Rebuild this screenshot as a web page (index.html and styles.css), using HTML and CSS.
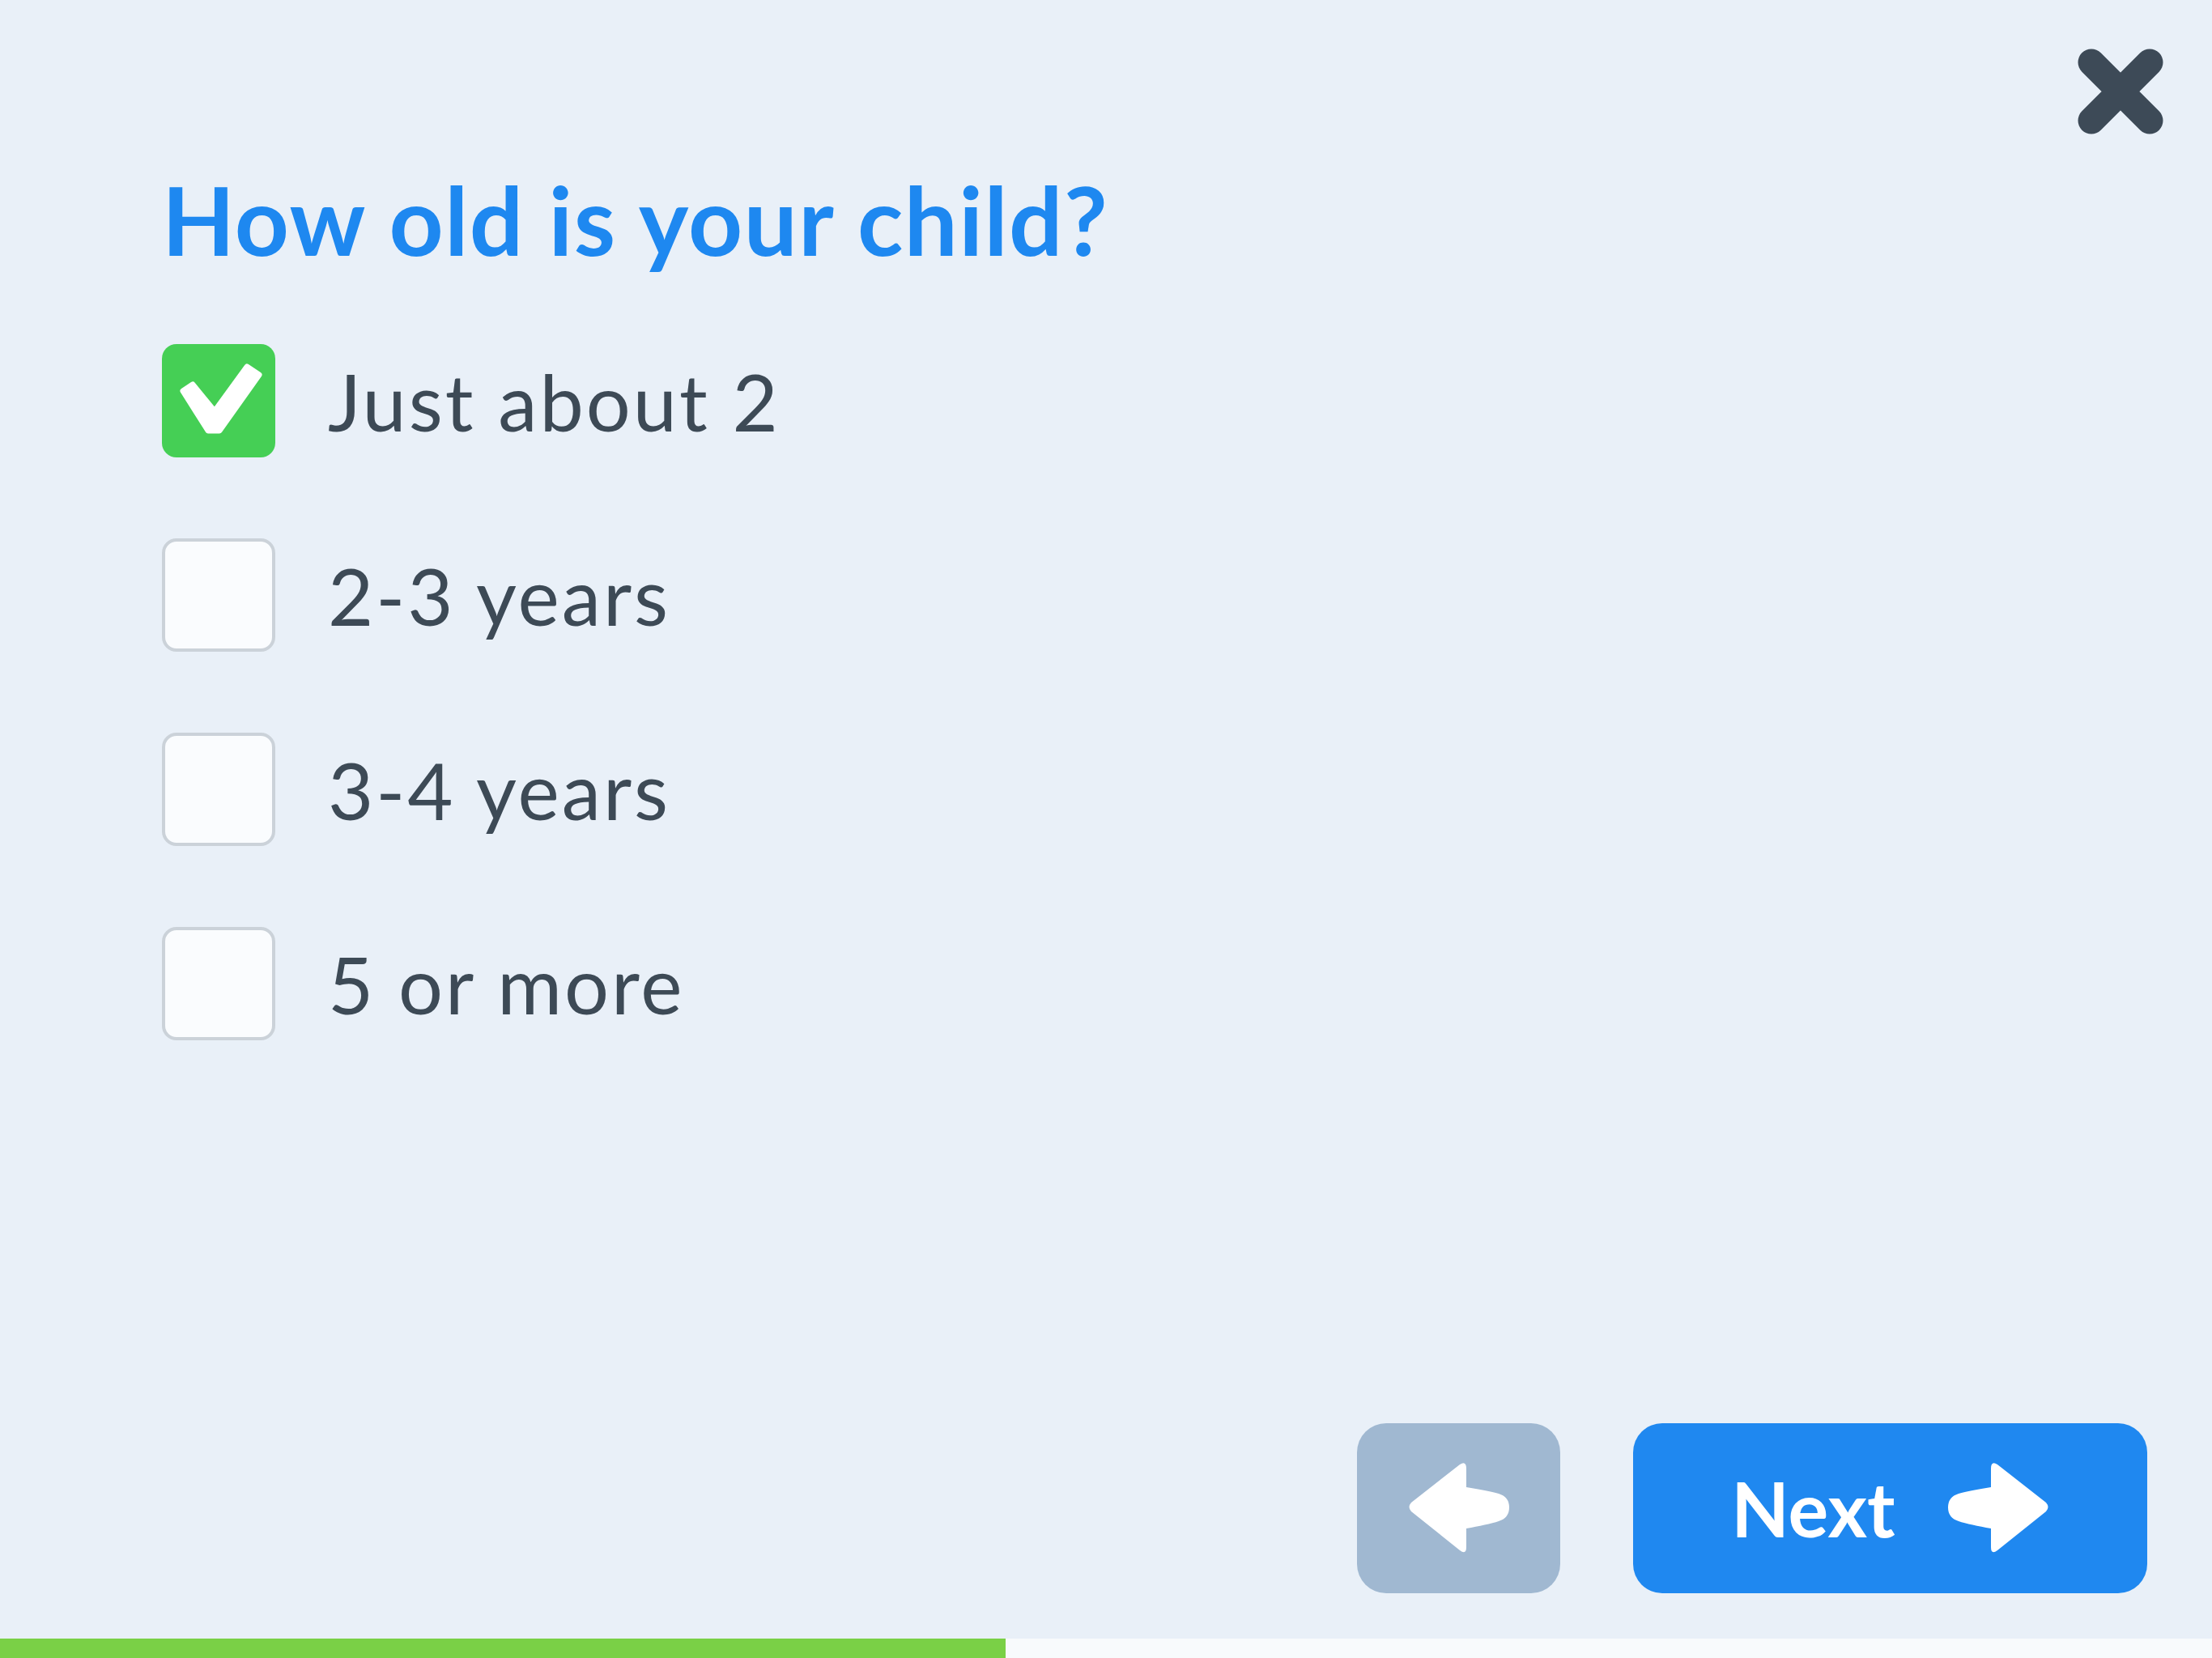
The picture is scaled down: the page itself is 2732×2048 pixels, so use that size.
FILE: index.html
```html
<!DOCTYPE html>
<html lang="en">
<head>
<meta charset="utf-8">
<title>How old is your child?</title>
<link rel="stylesheet" href="styles.css">
</head>
<body>
<div class="page">
  <header class="topbar">
    <button class="close" aria-label="Close">
      <svg width="106" height="106" viewBox="0 0 106 106"><path d="M17 17 L89 89 M89 17 L17 89" stroke="#3d4a57" stroke-width="33" stroke-linecap="round" fill="none"/></svg>
    </button>
  </header>
  <main class="content">
    <h1 class="question">How old is your child?</h1>
    <ul class="options">
      <li class="option">
        <span class="box checked">
          <svg width="140" height="140" viewBox="0 0 140 140"><polygon points="26,58 38,50 65,83 105,28 120,38 71,107 57,107" fill="#fff" stroke="#fff" stroke-width="7" stroke-linejoin="round"/></svg>
        </span>
        <span class="label">Just about 2</span>
      </li>
      <li class="option">
        <span class="box"></span>
        <span class="label">2-3 years</span>
      </li>
      <li class="option">
        <span class="box"></span>
        <span class="label">3-4 years</span>
      </li>
      <li class="option">
        <span class="box"></span>
        <span class="label">5 or more</span>
      </li>
    </ul>
  </main>
  <footer class="actions">
    <button class="btn back" aria-label="Back">
      <svg class="arrow flip" width="126" height="118" viewBox="7 9 126 118"><path d="M61 19 Q61 9 69 14 L129 61 Q134 66.5 129 72 L69 120 Q61 126 61 116 L61 93 C45 90 30 87 21 84 Q8 80 8 67 Q8 54 21 50 C30 47 45 45 61 42 Z" fill="#fff"/></svg>
    </button>
    <button class="btn next">
      <span class="btn-text">Next</span>
      <svg class="arrow" width="126" height="118" viewBox="7 9 126 118"><path d="M61 19 Q61 9 69 14 L129 61 Q134 66.5 129 72 L69 120 Q61 126 61 116 L61 93 C45 90 30 87 21 84 Q8 80 8 67 Q8 54 21 50 C30 47 45 45 61 42 Z" fill="#fff"/></svg>
    </button>
  </footer>
  <div class="progress"><div class="progress-fill" style="width: 45.46%"></div></div>
</div>
</body>
</html>
```

FILE: styles.css
```css
* { box-sizing: border-box; }
html, body {
  margin: 0;
  padding: 0;
  background: #e9f0f8;
}
body {
  font-family: Lato, "Noto Sans", sans-serif;
  color: #3d4a56;
}
.page {
  width: 2732px;
  height: 2048px;
  display: flex;
  flex-direction: column;
}
.topbar {
  display: flex;
  justify-content: flex-end;
  padding: 60px 60px 0 0;
}
.close {
  width: 106px;
  height: 106px;
  padding: 0;
  border: 0;
  background: none;
  display: block;
}
.close svg { display: block; }
.content {
  flex: 1;
  padding: 0 0 0 200px;
}
.question {
  margin: 47px 0 0 0;
  font-size: 117px;
  line-height: 1;
  font-weight: 700;
  color: #1e88f0;
  letter-spacing: 1.5px;
}
.options {
  list-style: none;
  margin: 95px 0 0 0;
  padding: 0;
  display: flex;
  flex-direction: column;
  gap: 100px;
}
.option {
  display: flex;
  align-items: center;
  gap: 65px;
  height: 140px;
}
.box {
  width: 140px;
  height: 140px;
  flex: none;
  border-radius: 18px;
  border: 4px solid #cbd2d9;
  background: #fafcfe;
}
.box.checked {
  border: 0;
  background: #45cf55;
}
.box svg { display: block; }
.label {
  font-size: 97px;
  line-height: 1;
  font-weight: 400;
  letter-spacing: 3px;
}
.actions {
  display: flex;
  justify-content: flex-end;
  gap: 90px;
  padding: 0 80px 0 0;
  margin-bottom: 56px;
}
.btn {
  height: 210px;
  border: 0;
  border-radius: 36px;
  display: flex;
  align-items: center;
  justify-content: center;
  padding: 0;
  font-family: Lato, "Noto Sans", sans-serif;
}
.back {
  width: 251px;
  background: #a0b8d1;
}
.next {
  width: 635px;
  background: #1f88f0;
  gap: 64px;
}
.btn-text {
  color: #fff;
  font-size: 93px;
  font-weight: 700;
  line-height: 1;
}
.arrow { display: block; }
.flip { transform: scaleX(-1); }
.progress {
  height: 24px;
  background: #f8fafc;
}
.progress-fill {
  height: 100%;
  background: #7ad046;
}
```
